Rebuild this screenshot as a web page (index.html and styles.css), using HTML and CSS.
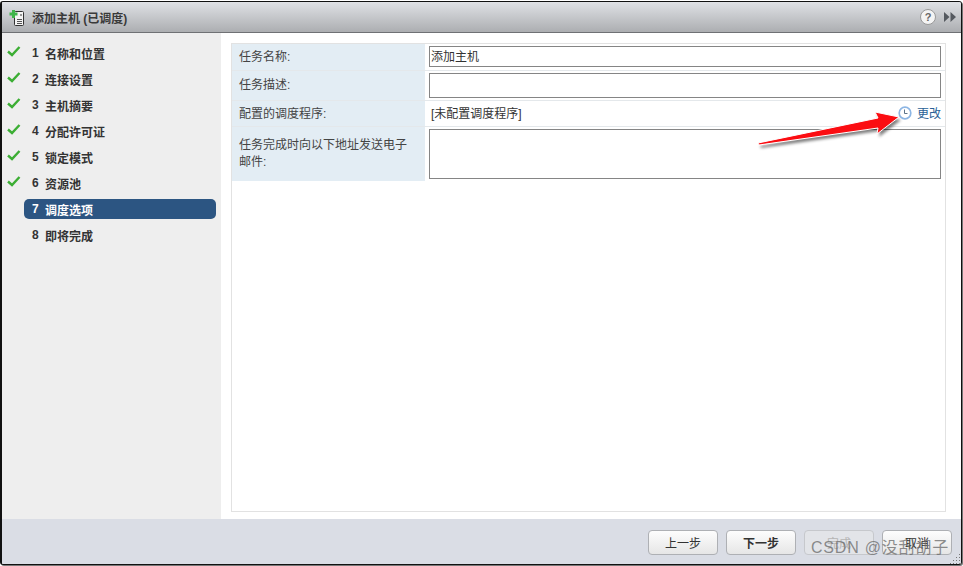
FILE: index.html
```html
<!DOCTYPE html>
<html lang="zh-CN">

<head>
    <meta charset="UTF-8">
    <title>添加主机 (已调度)</title>
    <link rel="stylesheet" href="styles.css">
</head>

<body>
    <div class="dialog">
        <div class="title-bar">
            <svg class="host-icon" width="20" height="20" viewBox="0 0 20 20">
                <rect x="5.500" y="4.500" width="9" height="14" rx="1" fill="#f4f4f4" stroke="#333" />
                <rect x="8" y="12" width="5" height="1" fill="#555" />
                <rect x="8" y="14" width="5" height="1" fill="#555" />
                <rect x="8" y="16" width="5" height="1" fill="#555" />
                <circle cx="12" cy="8" r="1" fill="#777" />
                <path d="M3 3h3v2.500h2.500v3h-2.500v2.500h-3v-2.500h-2.500v-3h2.500z" fill="#3fb54a" />
            </svg>
            <span class="title-text">添加主机 (已调度)</span>
            <span class="help-btn">?</span>
            <svg class="collapse-icon" width="12" height="10" viewBox="0 0 12 10">
                <path d="M0 0l5.500 5l-5.500 5zM6.500 0l5.500 5l-5.500 5z" fill="#55595f" />
            </svg>
        </div>

        <div class="dialog-body">
            <ul class="steps">
                <li class="step"><span class="check"><svg width="14" height="11" viewBox="0 0 14 11"><path d="M1 5.500l4 3.500l7.500-8" fill="none" stroke="#3cae34" stroke-width="2.400" /></svg></span><span class="num">1</span>名称和位置</li>
                <li class="step"><span class="check"><svg width="14" height="11" viewBox="0 0 14 11"><path d="M1 5.500l4 3.500l7.500-8" fill="none" stroke="#3cae34" stroke-width="2.400" /></svg></span><span class="num">2</span>连接设置</li>
                <li class="step"><span class="check"><svg width="14" height="11" viewBox="0 0 14 11"><path d="M1 5.500l4 3.500l7.500-8" fill="none" stroke="#3cae34" stroke-width="2.400" /></svg></span><span class="num">3</span>主机摘要</li>
                <li class="step"><span class="check"><svg width="14" height="11" viewBox="0 0 14 11"><path d="M1 5.500l4 3.500l7.500-8" fill="none" stroke="#3cae34" stroke-width="2.400" /></svg></span><span class="num">4</span>分配许可证</li>
                <li class="step"><span class="check"><svg width="14" height="11" viewBox="0 0 14 11"><path d="M1 5.500l4 3.500l7.500-8" fill="none" stroke="#3cae34" stroke-width="2.400" /></svg></span><span class="num">5</span>锁定模式</li>
                <li class="step"><span class="check"><svg width="14" height="11" viewBox="0 0 14 11"><path d="M1 5.500l4 3.500l7.500-8" fill="none" stroke="#3cae34" stroke-width="2.400" /></svg></span><span class="num">6</span>资源池</li>
                <li class="step active"><span class="check"></span><span class="num">7</span>调度选项</li>
                <li class="step"><span class="check"></span><span class="num">8</span>即将完成</li>
            </ul>

            <div class="content">
                <div class="form-panel">
                    <div class="form-row row-name">
                        <div class="form-label">任务名称:</div>
                        <div class="form-value"><input class="text-input" type="text" value="添加主机"></div>
                    </div>
                    <div class="form-row row-desc">
                        <div class="form-label">任务描述:</div>
                        <div class="form-value"><input class="text-input" type="text"></div>
                    </div>
                    <div class="form-row row-sched">
                        <div class="form-label">配置的调度程序:</div>
                        <div class="form-value sched-value">
                            <span>[未配置调度程序]</span>
                            <a class="change-link" href="#">
                                <svg width="14" height="14" viewBox="0 0 14 14">
                                    <circle cx="7" cy="7" r="5.800" fill="#fff" stroke="#8db6e4" stroke-width="1.700" />
                                    <path d="M6.500 3.500v4h3" fill="none" stroke="#5b7288" />
                                </svg>更改</a>
                        </div>
                    </div>
                    <div class="form-row row-mail">
                        <div class="form-label">任务完成时向以下地址发送电子邮件:</div>
                        <div class="form-value"><textarea class="text-area"></textarea></div>
                    </div>
                </div>
            </div>
        </div>

        <div class="footer">
            <button class="btn">上一步</button>
            <button class="btn btn-next">下一步</button>
            <button class="btn" disabled>完成</button>
            <button class="btn">取消</button>
        </div>

        <svg class="resize-grip" width="11" height="11" viewBox="0 0 11 11">
            <path d="M9 1h1v1h-1zM6 4h1v1h-1zM9 4h1v1h-1zM3 7h1v1h-1zM6 7h1v1h-1zM9 7h1v1h-1zM0 10h1v1h-1zM3 10h1v1h-1zM6 10h1v1h-1zM9 10h1v1h-1z" fill="#777" />
        </svg>
    </div>

    <!-- annotation drawn over the screenshot -->
    <svg class="arrow" width="150" height="45" viewBox="0 0 150 45">
        <defs>
            <filter id="soft" x="-10%" y="-30%" width="120%" height="170%">
                <feGaussianBlur stdDeviation="1.500" />
            </filter>
        </defs>
        <path d="M1 35L121 10L118 4L142 9L120 26L121 20L2 37z" fill="#000" opacity="0.5" transform="translate(2 3)" filter="url(#soft)" />
        <path d="M1 35L121 10L118 4L142 9L120 26L121 20L2 37z" fill="#fb0d12" stroke="#fff" stroke-width="1" />
    </svg>

    <div class="watermark">CSDN @没刮胡子</div>
</body>

</html>
```

FILE: styles.css
```css
html, body {
    margin: 0;
    height: 100%;
}

body {
    position: relative;
    background-color: #fff;
    font-family: "Liberation Sans", "Noto Sans CJK SC", sans-serif;
    font-size: 12px;
    color: #333;
    overflow: hidden;
}

.dialog {
    position: relative;
    display: flex;
    flex-direction: column;
    box-sizing: border-box;
    width: 962px;
    height: 564px;
    margin-top: 1px;
    border: 1px solid #111;
    border-left-width: 2px;
    border-radius: 3px;
    box-shadow: 1px 1px 0 #777;
    overflow: hidden;
}

.title-bar {
    display: flex;
    align-items: center;
    box-sizing: border-box;
    height: 31px;
    padding: 0 5px 0 7px;
    flex-shrink: 0;
    background: linear-gradient(#dfe1e5, #acaeb1);
    border-bottom: 1px solid #6f7174;
}

.host-icon {
    margin-right: 3px;
}

.title-text {
    flex: 1;
    font-weight: bold;
    color: #3a3a3a;
}

.help-btn {
    display: flex;
    align-items: center;
    justify-content: center;
    box-sizing: border-box;
    width: 16px;
    height: 16px;
    margin-right: 8px;
    border: 1px solid #999;
    border-radius: 50%;
    background-color: #f4f4f4;
    font-weight: bold;
    font-size: 11px;
    color: #666;
}

.dialog-body {
    display: flex;
    flex: 1;
    min-height: 0;
}

.steps {
    width: 219px;
    flex-shrink: 0;
    box-sizing: border-box;
    margin: 0;
    padding: 10px 5px 0 5px;
    list-style: none;
    background-color: #eee;
}

.step {
    display: flex;
    align-items: center;
    height: 20px;
    margin-bottom: 6px;
    border-radius: 5px;
    font-weight: bold;
    color: #333;
}

.step.active {
    margin-left: 17px;
    background-color: #2c5582;
    color: #fff;
}

.check {
    display: flex;
    width: 25px;
    flex-shrink: 0;
    margin-top: -4px;
}

.step.active .check {
    width: 8px;
}

.num {
    width: 13px;
    flex-shrink: 0;
}

.content {
    flex: 1;
    padding: 10px 15px 7px 10px;
    background-color: #fff;
}

.form-panel {
    box-sizing: border-box;
    height: 100%;
    border: 1px solid #e2e2e2;
}

.form-row {
    display: flex;
    border-bottom: 1px solid #e4e8eb;
}

.row-name {
    height: 26px;
}

.row-desc {
    height: 29px;
}

.row-sched {
    height: 25px;
}

.row-mail {
    height: 54px;
    border-bottom: none;
}

.form-label {
    width: 193px;
    flex-shrink: 0;
    box-sizing: border-box;
    padding: 5px 8px 0 7px;
    background-color: #e3edf4;
    line-height: 17px;
    color: #444;
}

.row-desc .form-label {
    padding-top: 6px;
}

.row-mail .form-label {
    padding-top: 10px;
}

.form-value {
    flex: 1;
    padding: 2px 4px 0 4px;
}

.sched-value {
    display: flex;
    justify-content: space-between;
    align-items: center;
    padding: 0 4px 2px 6px;
}

.text-input,
.text-area {
    display: block;
    box-sizing: border-box;
    width: 100%;
    margin: 0;
    padding: 0 1px;
    border: 1px solid #858585;
    border-radius: 0;
    background-color: #fff;
    font-family: inherit;
    font-size: 12px;
    color: #333;
    outline: none;
    resize: none;
}

.text-input {
    height: 21px;
    padding-bottom: 2px;
}

.row-desc .text-input {
    height: 25px;
}

.text-area {
    height: 50px;
}

.change-link {
    display: flex;
    align-items: center;
    gap: 5px;
    color: #2a5f96;
    text-decoration: none;
}

.footer {
    display: flex;
    justify-content: flex-end;
    gap: 8px;
    box-sizing: border-box;
    height: 45px;
    flex-shrink: 0;
    padding: 11px 9px 0 0;
    background-color: #dadde5;
}

.btn {
    box-sizing: border-box;
    width: 70px;
    height: 25px;
    padding: 0;
    border: 1px solid #aeb0b4;
    border-radius: 4px;
    background: linear-gradient(#fdfdfd, #e6e6e6);
    font-family: inherit;
    font-size: 12px;
    color: #333;
}

.btn-next {
    font-weight: bold;
}

.btn:disabled {
    color: #b5b5b5;
    background: #e2e4e8;
    border-color: #c6c8cc;
}

.resize-grip {
    position: absolute;
    right: 0;
    bottom: 0;
}

.arrow {
    position: absolute;
    left: 757px;
    top: 108px;
}

.watermark {
    position: absolute;
    left: 811px;
    top: 534px;
    font-size: 16px;
    color: rgba(105, 105, 105, 0.75);
    letter-spacing: 0.8px;
}
```
